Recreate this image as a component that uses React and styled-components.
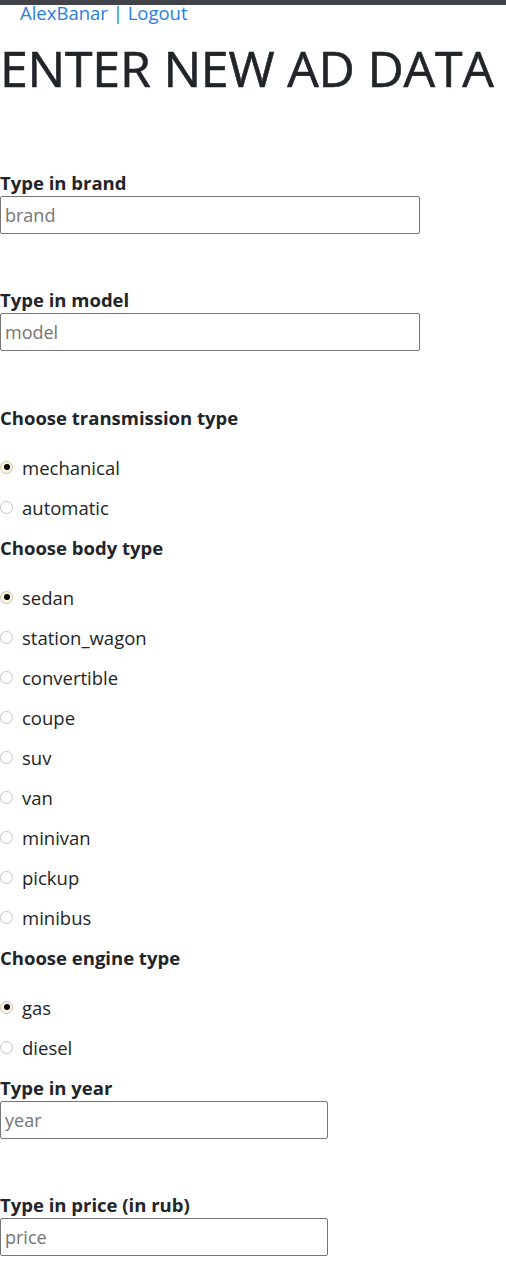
import React from "react";
import styled, { createGlobalStyle } from "styled-components";

const GlobalStyle = createGlobalStyle`
  * { box-sizing: border-box; }
  body {
    margin: 0;
    font-family: "Open Sans", "Noto Sans", sans-serif;
    color: #212529;
    background: #fff;
  }
`;

const TopBar = styled.div`
  position: fixed;
  top: 0;
  left: 0;
  right: 0;
  height: 5px;
  background: #424249;
  z-index: 10;
`;

const Nav = styled.nav`
  display: flex;
  align-items: center;
  padding-left: 20px;
  height: 27px;
  font-size: 18.5px;
  line-height: 1;
`;

const NavLink = styled.a`
  color: #2a7de1;
  text-decoration: none;
  white-space: pre;
`;

const Heading = styled.h1`
  margin: 10px 0 0 0;
  font-size: 50px;
  font-weight: 400;
  letter-spacing: -0.2px;
  line-height: 62px;
  color: #212529;
  -webkit-text-stroke: 0.6px #212529;
  white-space: nowrap;
`;

const Form = styled.form`
  display: flex;
  flex-direction: column;
  align-items: flex-start;
  padding-top: 63px;
`;

const FieldGroup = styled.div`
  display: flex;
  flex-direction: column;
  margin-bottom: 46px;
`;

const FieldLabel = styled.label`
  display: block;
  margin-top: 6.5px;
  font-size: 18.5px;
  font-weight: 700;
  line-height: 27px;
`;

const TextInput = styled.input`
  width: ${(p) => p.$width}px;
  height: 38px;
  margin: 0;
  padding: 0 4px;
  border: 1px solid #767676;
  border-radius: 2px;
  font-family: inherit;
  font-size: 18px;
  color: #212529;
  background: #fff;
  &::placeholder {
    color: #757575;
  }
`;

const RadioSection = styled.div`
  display: flex;
  flex-direction: column;
`;

const SectionTitle = styled.div`
  margin: 6.5px 0 16.5px 0;
  font-size: 18.5px;
  font-weight: 700;
  line-height: 27px;
`;

const RadioRow = styled.label`
  display: flex;
  align-items: center;
  gap: 9px;
  height: 40px;
  font-size: 18.5px;
  line-height: 27px;
  color: #212529;
`;

const Radio = styled.span`
  position: relative;
  flex: none;
  width: 13px;
  height: 13px;
  border-radius: 50%;
  border: 1px solid ${(p) => (p.$checked ? "#d6c49a" : "#c4c4c4")};
  background: ${(p) => (p.$checked ? "#fbf5e6" : "#fff")};
  &::after {
    content: "";
    display: ${(p) => (p.$checked ? "block" : "none")};
    position: absolute;
    left: 2.5px;
    top: 2.5px;
    width: 6px;
    height: 6px;
    border-radius: 50%;
    background: #000;
  }
`;

const sections = [
  { title: "Choose transmission type", options: ["mechanical", "automatic"] },
  {
    title: "Choose body type",
    options: [
      "sedan",
      "station_wagon",
      "convertible",
      "coupe",
      "suv",
      "van",
      "minivan",
      "pickup",
      "minibus",
    ],
  },
  { title: "Choose engine type", options: ["gas", "diesel"] },
];

function Field({ label, placeholder, width }) {
  return (
    <FieldGroup>
      <FieldLabel>{label}</FieldLabel>
      <TextInput placeholder={placeholder} $width={width} />
    </FieldGroup>
  );
}

export default function App() {
  return (
    <>
      <GlobalStyle />
      <TopBar />
      <Nav>
        <NavLink href="#">{"AlexBanar | Logout"}</NavLink>
      </Nav>
      <Heading>ENTER NEW AD DATA</Heading>
      <Form>
        <Field label="Type in brand" placeholder="brand" width={420} />
        <Field label="Type in model" placeholder="model" width={420} />
        {sections.map((s) => (
          <RadioSection key={s.title}>
            <SectionTitle>{s.title}</SectionTitle>
            {s.options.map((o, i) => (
              <RadioRow key={o}>
                <Radio $checked={i === 0} />
                {o}
              </RadioRow>
            ))}
          </RadioSection>
        ))}
        <Field label="Type in year" placeholder="year" width={328} />
        <Field label="Type in price (in rub)" placeholder="price" width={328} />
      </Form>
    </>
  );
}
